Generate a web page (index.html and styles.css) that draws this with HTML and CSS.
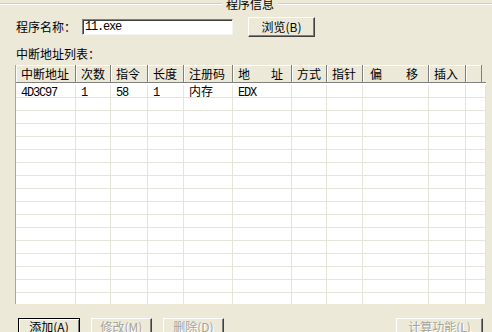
FILE: index.html
```html
<!DOCTYPE html>
<html lang="zh">
<head>
<meta charset="utf-8">
<title>程序信息</title>
<link rel="stylesheet" href="styles.css">
</head>
<body>
<div class="dialog">
  <div class="group-title">
    <span class="gline first"></span>
    <span class="gtext">程序信息</span>
    <span class="gline"></span>
  </div>

  <div class="prog-row">
    <span class="lbl">程序名称：</span>
    <div class="input"><span class="m">11.exe</span></div>
    <div class="btn browse">浏览(B)</div>
  </div>

  <div class="lbl list-lbl">中断地址列表：</div>

  <div class="list">
    <div class="hdr grid">
      <div class="hc">中断地址</div>
      <div class="hc">次数</div>
      <div class="hc">指令</div>
      <div class="hc">长度</div>
      <div class="hc">注册码</div>
      <div class="hc spread s1"><span>地</span><span>址</span></div>
      <div class="hc">方式</div>
      <div class="hc">指针</div>
      <div class="hc spread s2"><span>偏</span><span>移</span></div>
      <div class="hc">插入</div>
      <div class="hc fill"></div>
    </div>
    <div class="body">
      <div class="row grid">
        <div class="c"><span class="m">4D3C97</span></div>
        <div class="c"><span class="m">1</span></div>
        <div class="c"><span class="m">58</span></div>
        <div class="c"><span class="m">1</span></div>
        <div class="c">内存</div>
        <div class="c"><span class="m">EDX</span></div>
        <div class="c"></div><div class="c"></div><div class="c"></div><div class="c"></div><div class="c"></div>
      </div>
      <div class="row grid"><div class="c"></div><div class="c"></div><div class="c"></div><div class="c"></div><div class="c"></div><div class="c"></div><div class="c"></div><div class="c"></div><div class="c"></div><div class="c"></div><div class="c"></div></div>
      <div class="row grid"><div class="c"></div><div class="c"></div><div class="c"></div><div class="c"></div><div class="c"></div><div class="c"></div><div class="c"></div><div class="c"></div><div class="c"></div><div class="c"></div><div class="c"></div></div>
      <div class="row grid"><div class="c"></div><div class="c"></div><div class="c"></div><div class="c"></div><div class="c"></div><div class="c"></div><div class="c"></div><div class="c"></div><div class="c"></div><div class="c"></div><div class="c"></div></div>
      <div class="row grid"><div class="c"></div><div class="c"></div><div class="c"></div><div class="c"></div><div class="c"></div><div class="c"></div><div class="c"></div><div class="c"></div><div class="c"></div><div class="c"></div><div class="c"></div></div>
      <div class="row grid"><div class="c"></div><div class="c"></div><div class="c"></div><div class="c"></div><div class="c"></div><div class="c"></div><div class="c"></div><div class="c"></div><div class="c"></div><div class="c"></div><div class="c"></div></div>
      <div class="row grid"><div class="c"></div><div class="c"></div><div class="c"></div><div class="c"></div><div class="c"></div><div class="c"></div><div class="c"></div><div class="c"></div><div class="c"></div><div class="c"></div><div class="c"></div></div>
      <div class="row grid"><div class="c"></div><div class="c"></div><div class="c"></div><div class="c"></div><div class="c"></div><div class="c"></div><div class="c"></div><div class="c"></div><div class="c"></div><div class="c"></div><div class="c"></div></div>
      <div class="row grid"><div class="c"></div><div class="c"></div><div class="c"></div><div class="c"></div><div class="c"></div><div class="c"></div><div class="c"></div><div class="c"></div><div class="c"></div><div class="c"></div><div class="c"></div></div>
      <div class="row grid"><div class="c"></div><div class="c"></div><div class="c"></div><div class="c"></div><div class="c"></div><div class="c"></div><div class="c"></div><div class="c"></div><div class="c"></div><div class="c"></div><div class="c"></div></div>
      <div class="row grid"><div class="c"></div><div class="c"></div><div class="c"></div><div class="c"></div><div class="c"></div><div class="c"></div><div class="c"></div><div class="c"></div><div class="c"></div><div class="c"></div><div class="c"></div></div>
      <div class="row grid"><div class="c"></div><div class="c"></div><div class="c"></div><div class="c"></div><div class="c"></div><div class="c"></div><div class="c"></div><div class="c"></div><div class="c"></div><div class="c"></div><div class="c"></div></div>
      <div class="row grid"><div class="c"></div><div class="c"></div><div class="c"></div><div class="c"></div><div class="c"></div><div class="c"></div><div class="c"></div><div class="c"></div><div class="c"></div><div class="c"></div><div class="c"></div></div>
      <div class="row grid"><div class="c"></div><div class="c"></div><div class="c"></div><div class="c"></div><div class="c"></div><div class="c"></div><div class="c"></div><div class="c"></div><div class="c"></div><div class="c"></div><div class="c"></div></div>
      <div class="row grid"><div class="c"></div><div class="c"></div><div class="c"></div><div class="c"></div><div class="c"></div><div class="c"></div><div class="c"></div><div class="c"></div><div class="c"></div><div class="c"></div><div class="c"></div></div>
      <div class="row grid"><div class="c"></div><div class="c"></div><div class="c"></div><div class="c"></div><div class="c"></div><div class="c"></div><div class="c"></div><div class="c"></div><div class="c"></div><div class="c"></div><div class="c"></div></div>
      <div class="row grid"><div class="c"></div><div class="c"></div><div class="c"></div><div class="c"></div><div class="c"></div><div class="c"></div><div class="c"></div><div class="c"></div><div class="c"></div><div class="c"></div><div class="c"></div></div>
    </div>
  </div>

  <div class="btn-row">
    <div class="btn bb default">添加(A)</div>
    <div class="btn bb disabled w61">修改(M)</div>
    <div class="btn bb disabled w61">删除(D)</div>
    <div class="btn bb disabled calc">计算功能(L)</div>
  </div>
</div>
</body>
</html>
```

FILE: styles.css
```css
html, body {
  margin: 0;
  padding: 0;
  background: #ece9d8;
}
body {
  width: 492px;
  height: 332px;
  overflow: hidden;
  font-family: "Noto Sans CJK SC", "Noto Sans", sans-serif;
  font-size: 12px;
  line-height: 12px;
  color: #000;
}
.dialog {
  display: flex;
  flex-direction: column;
}
.m {
  font-family: "Liberation Mono", monospace;
  font-size: 12px;
  letter-spacing: -1.2px;
}

/* group box title */
.group-title {
  display: flex;
  align-items: center;
  height: 8px;
  margin-bottom: 1px;
  gap: 4px;
}
.gline {
  flex: 1;
  height: 0;
  border-top: 1px solid #d0d0bf;
  border-bottom: 1px solid #fff;
}
.gline.first {
  flex: 0 0 222px;
}
.gtext {
  white-space: nowrap;
}

/* program row */
.prog-row {
  display: flex;
  align-items: center;
  height: 20px;
  margin-top: 8px;
  padding-left: 16px;
}
.lbl {
  white-space: nowrap;
}
.input {
  margin-left: 6px;
  width: 147px;
  height: 14px;
  background: #fff;
  border: 1px solid;
  border-color: #7f7f7f #f4f4f0 #f4f4f0 #7f7f7f;
  box-shadow: inset 1px 1px 0 #404040;
  display: flex;
  align-items: center;
  padding-left: 2px;
}
.btn {
  display: flex;
  justify-content: center;
  align-items: center;
  box-sizing: border-box;
  background: #ece9d8;
  border: 1px solid;
  border-color: #fff #404040 #404040 #fff;
  box-shadow: inset -1px -1px 0 #808080;
  white-space: nowrap;
}
.browse {
  margin-left: 15px;
  width: 67px;
  height: 20px;
}

.list-lbl {
  margin-top: 11px;
  padding-left: 16px;
  height: 12px;
}

/* list view */
.list {
  margin-top: 5px;
  margin-left: 15px;
  width: 471px;
  height: 239px;
  overflow: hidden;
  background: #fff;
  border-left: 1px solid #a5a5a5;
  box-sizing: border-box;
}
.grid {
  display: grid;
  grid-template-columns: 60px 35px 37px 36px 49px 59px 35px 36px 66px 37px 1fr;
}
.hdr {
  height: 18px;
  box-sizing: border-box;
  border-bottom: 1px solid #808080;
  background: #ece9d8;
}
.hc {
  box-sizing: border-box;
  border-right: 1px solid #808080;
  box-shadow: inset 1px 1px 0 #fff;
  padding-left: 5px;
  display: flex;
  align-items: center;
  white-space: nowrap;
  overflow: hidden;
}
.hc.spread {
  justify-content: space-between;
}
.hc.s1 {
  padding: 0 8px 0 5px;
}
.hc.s2 {
  padding: 0 10px 0 7px;
}
.hc.fill {
  margin-right: 4px;
}
.body {
  padding-top: 2px;
}
.row {
  height: 13px;
  box-sizing: border-box;
  border-bottom: 1px solid #e6e5dc;
}
.c {
  box-sizing: border-box;
  border-right: 1px solid #e6e5dc;
  padding-left: 5px;
  white-space: nowrap;
  line-height: 12px;
}

/* bottom buttons */
.btn-row {
  display: flex;
  margin-top: 14px;
  padding-left: 18px;
  padding-right: 9px;
  gap: 11px;
}
.bb {
  height: 24px;
  align-items: flex-start;
  padding-top: 2px;
}
.default {
  width: 62px;
  border: 1px solid #000;
  box-shadow: inset 1px 1px 0 #fff, inset -1px -1px 0 #808080;
}
.w61 {
  width: 61px;
}
.disabled {
  color: #a4a39b;
  text-shadow: 1px 1px 0 #fff;
}
.calc {
  margin-left: auto;
  width: 87px;
}
```
